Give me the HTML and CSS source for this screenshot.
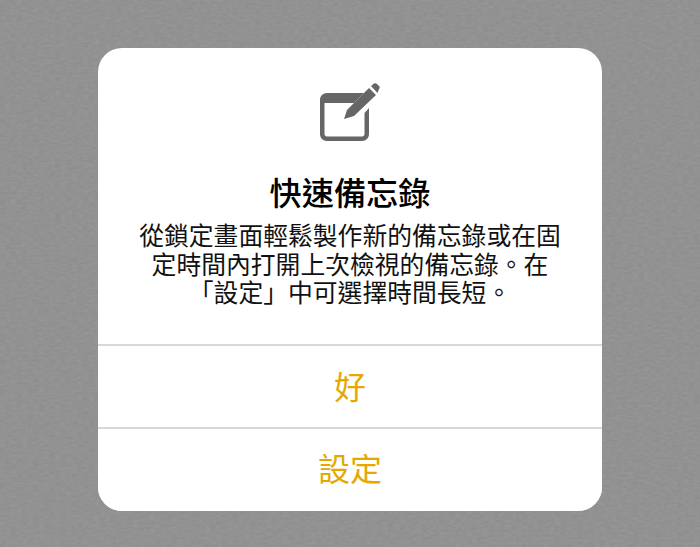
FILE: index.html
```html
<!DOCTYPE html>
<html lang="zh-Hant">
<head>
    <meta charset="UTF-8">
    <meta name="viewport" content="width=device-width, initial-scale=1.0">
    <title>快速備忘錄</title>
    <link rel="stylesheet" href="styles.css">
</head>
<body>

    <svg class="texture" width="700" height="547" aria-hidden="true">
        <filter id="grain">
            <feTurbulence type="fractalNoise" baseFrequency="0.18 0.4" numOctaves="3" seed="4"/>
            <feColorMatrix type="matrix" values="0 0 0 0 0.5  0 0 0 0 0.5  0 0 0 0 0.5  0.3 0 0 0 -0.07"/>
        </filter>
        <rect width="700" height="547" filter="url(#grain)"/>
    </svg>

    <div class="dialog">
        <div class="content">
            <svg class="icon" width="60" height="58" viewBox="0 0 60 58">
                <path class="box" d="M7 10H44L34 20H4.5V51C4.5 52.5 5.5 53.5 7 53.5H42C43.5 53.5 44.5 52.5 44.5 51V30L49 25V51C49 55 46 58 42 58H7C3 58 0 55 0 51V17C0 13 3 10 7 10Z"/>
                <path class="box" d="M24 36L27 27L49 5L56 12L34 33Z"/>
                <path class="box" d="M51 3L54 .5C55 0 56 0 57 1L59 3C60 4 60 5 59 6L57.500 10Z"/>
            </svg>
            <h1 class="title">快速備忘錄</h1>
            <p class="message">從鎖定畫面輕鬆製作新的備忘錄或在固<br>定時間內打開上次檢視的備忘錄。在<br>「設定」中可選擇時間長短。</p>
        </div>
        <button class="action">好</button>
        <button class="action">設定</button>
    </div>

</body>
</html>
```

FILE: styles.css
```css
body {
    font-family: "Noto Sans CJK TC", "Liberation Sans", sans-serif;
    display: flex;
    justify-content: center;
    align-items: flex-start;
    height: 547px;
    margin: 0;
    background-color: #8e8e8e;
    overflow: hidden;
}

.texture {
    position: absolute;
    top: 0;
    left: 0;
}

.dialog {
    position: relative;
    display: flex;
    flex-direction: column;
    width: 504px;
    height: 463px;
    margin-top: 48px;
    background-color: #fff;
    border-radius: 24px;
    overflow: hidden;
}

.content {
    display: flex;
    flex-direction: column;
    align-items: center;
    height: 296px;
    padding-top: 35px;
    box-sizing: border-box;
}

.box {
    fill: #666;
}

.title {
    margin: 29px 0 0;
    font-size: 32.2px;
    line-height: 42px;
    font-weight: 500;
    color: #000;
}

.message {
    margin: 8px 0 0;
    font-size: 24.8px;
    line-height: 28.5px;
    text-align: center;
    color: #111;
}

.action {
    flex: 0 0 83px;
    padding: 0 0 4px;
    font-family: inherit;
    font-size: 32px;
    color: #e5a800;
    background-color: #fff;
    border: none;
    border-top: 2px solid #d8d8d8;
    cursor: pointer;
}

.action:last-child {
    flex: 1;
    padding-bottom: 6px;
}
```
